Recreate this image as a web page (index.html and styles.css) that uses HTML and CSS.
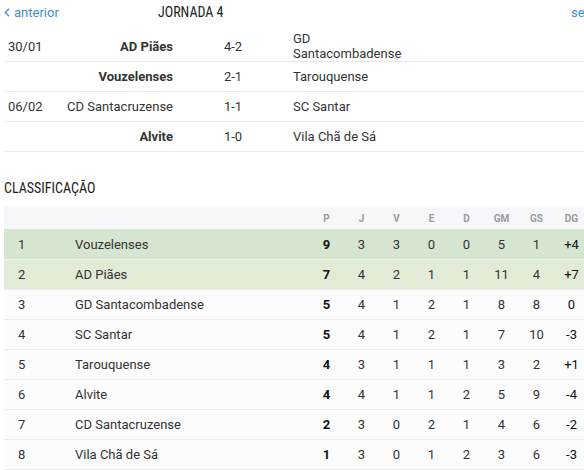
FILE: index.html
```html
<!DOCTYPE html>
<html lang="pt">
<head>
<meta charset="utf-8">
<title>Jornada 4</title>
<link rel="stylesheet" href="styles.css">
</head>
<body>
<div class="page">
  <nav class="nav">
    <a class="nav-link prev" href="#"><svg class="chev" width="6" height="9" viewBox="0 0 6 9"><path d="M5 0.8 L1.3 4.5 L5 8.2" fill="none" stroke="currentColor" stroke-width="1.3"/></svg>anterior</a>
    <h2 class="title">JORNADA 4</h2>
    <a class="nav-link next" href="#">seguinte<svg class="chev" width="6" height="9" viewBox="0 0 6 9"><path d="M1 0.8 L4.7 4.5 L1 8.2" fill="none" stroke="currentColor" stroke-width="1.3"/></svg></a>
  </nav>

  <table class="matches">
    <colgroup>
      <col class="c-date"><col class="c-home"><col class="c-score"><col class="c-away"><col>
    </colgroup>
    <tbody>
      <tr><td class="date">30/01</td><td class="home win">AD Piães</td><td class="score">4-2</td><td class="away">GD Santacombadense</td><td></td></tr>
      <tr><td class="date"></td><td class="home win">Vouzelenses</td><td class="score">2-1</td><td class="away">Tarouquense</td><td></td></tr>
      <tr><td class="date">06/02</td><td class="home">CD Santacruzense</td><td class="score">1-1</td><td class="away">SC Santar</td><td></td></tr>
      <tr><td class="date"></td><td class="home win">Alvite</td><td class="score">1-0</td><td class="away">Vila Chã de Sá</td><td></td></tr>
    </tbody>
  </table>

  <h2 class="section-title">CLASSIFICAÇÃO</h2>

  <table class="standings">
    <colgroup>
      <col class="c-pos"><col class="c-team"><col class="c-num"><col class="c-num"><col class="c-num"><col class="c-num"><col class="c-num"><col class="c-num"><col class="c-num"><col class="c-num">
    </colgroup>
    <thead>
      <tr><th></th><th></th><th>P</th><th>J</th><th>V</th><th>E</th><th>D</th><th>GM</th><th>GS</th><th>DG</th></tr>
    </thead>
    <tbody>
      <tr class="first"><td class="pos">1</td><td class="team">Vouzelenses</td><td class="pts">9</td><td>3</td><td>3</td><td>0</td><td>0</td><td>5</td><td>1</td><td class="dg">+4</td></tr>
      <tr class="second"><td class="pos">2</td><td class="team">AD Piães</td><td class="pts">7</td><td>4</td><td>2</td><td>1</td><td>1</td><td>11</td><td>4</td><td class="dg">+7</td></tr>
      <tr><td class="pos">3</td><td class="team">GD Santacombadense</td><td class="pts">5</td><td>4</td><td>1</td><td>2</td><td>1</td><td>8</td><td>8</td><td class="dg">0</td></tr>
      <tr><td class="pos">4</td><td class="team">SC Santar</td><td class="pts">5</td><td>4</td><td>1</td><td>2</td><td>1</td><td>7</td><td>10</td><td class="dg">-3</td></tr>
      <tr><td class="pos">5</td><td class="team">Tarouquense</td><td class="pts">4</td><td>3</td><td>1</td><td>1</td><td>1</td><td>3</td><td>2</td><td class="dg">+1</td></tr>
      <tr><td class="pos">6</td><td class="team">Alvite</td><td class="pts">4</td><td>4</td><td>1</td><td>1</td><td>2</td><td>5</td><td>9</td><td class="dg">-4</td></tr>
      <tr><td class="pos">7</td><td class="team">CD Santacruzense</td><td class="pts">2</td><td>3</td><td>0</td><td>2</td><td>1</td><td>4</td><td>6</td><td class="dg">-2</td></tr>
      <tr><td class="pos">8</td><td class="team">Vila Chã de Sá</td><td class="pts">1</td><td>3</td><td>0</td><td>1</td><td>2</td><td>3</td><td>6</td><td class="dg">-3</td></tr>
    </tbody>
  </table>
</div>
</body>
</html>
```

FILE: styles.css
```css
html, body {
  margin: 0;
  padding: 0;
  overflow: hidden;
  background: #ffffff;
}

body {
  font-family: Roboto, "Noto Sans", "Liberation Sans", sans-serif;
  font-size: 13px;
  color: #333333;
}

.page {
  width: 640px;
  padding-left: 4px;
}

.nav {
  display: grid;
  grid-template-columns: 154px 413px auto;
  align-items: center;
  height: 24px;
}

.nav-link {
  color: #3f8fd8;
  text-decoration: none;
  font-size: 13px;
  display: flex;
  align-items: center;
  gap: 4px;
}

.chev {
  display: block;
}

.title {
  margin: 0;
  font-family: "Roboto Condensed", "Liberation Sans Narrow", "DejaVu Sans Condensed", sans-serif;
  font-weight: normal;
  font-size: 14px;
  color: #222222;
}

.matches {
  margin-top: 7px;
  border-collapse: collapse;
  table-layout: fixed;
  width: 636px;
}

.c-date { width: 50px; }
.c-home { width: 127px; }
.c-score { width: 104px; }
.c-away { width: 128px; }

.matches td {
  height: 29px;
  padding: 0;
  line-height: 15px;
  border-bottom: 1px solid #ebebeb;
  vertical-align: middle;
}

.matches .date {
  padding-left: 4px;
}

.matches .home {
  text-align: right;
  padding-right: 8px;
}

.matches .win {
  font-weight: bold;
}

.matches .score {
  text-align: center;
}

.matches .away {
  padding-left: 8px;
}

.section-title {
  margin: 26px 0 9px;
  height: 20px;
  line-height: 20px;
  font-family: "Roboto Condensed", "Liberation Sans Narrow", "DejaVu Sans Condensed", sans-serif;
  font-weight: normal;
  font-size: 14px;
  color: #222222;
}

.standings {
  border-collapse: collapse;
  table-layout: fixed;
  width: 585px;
}

.c-pos { width: 71px; }
.c-team { width: 234px; }
.c-num { width: 35px; }

.standings th {
  height: 22px;
  padding: 0;
  background: #f6f7fb;
  color: #9a9a9a;
  font-size: 10px;
  font-weight: bold;
  text-align: center;
}

.standings td {
  height: 29px;
  padding: 0;
  text-align: center;
  border-bottom: 1px solid #ececec;
  background: #fcfcfd;
}

.standings .pos {
  text-align: left;
  padding-left: 14px;
}

.standings .team {
  text-align: left;
}

.standings .pts {
  font-weight: bold;
  color: #111111;
}

.standings .dg {
  color: #111111;
}

.standings .first td {
  height: 30px;
  background: #d6e5d0;
  border-bottom-color: #eef3ea;
}

.standings .second td {
  background: #e2ebd5;
}
```
